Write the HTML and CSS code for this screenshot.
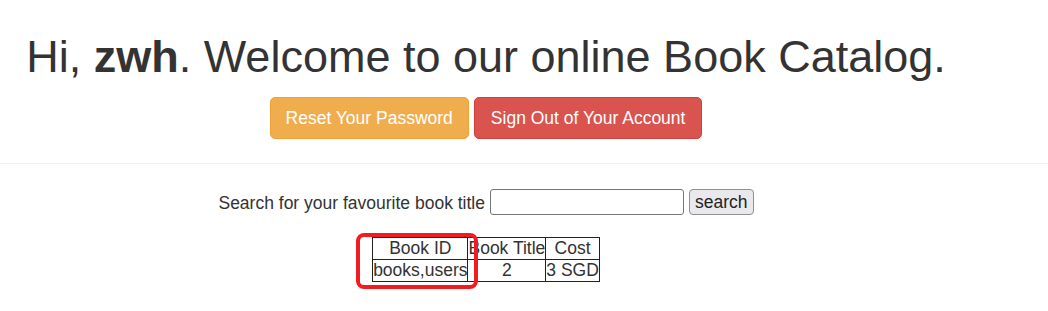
FILE: index.html
```html
<!DOCTYPE html>
<html lang="en">
<head>
  <meta charset="UTF-8">
  <meta name="viewport" content="width=device-width, initial-scale=1.0">
  <title>Book Catalog</title>
  <link rel="stylesheet" href="styles.css">
</head>
<body>
  <div class="page-header">
    <h1>Hi, <b>zwh</b>. Welcome to our online Book Catalog.</h1>
    <p class="actions">
      <a href="#" class="btn btn-warning">Reset Your Password</a>
      <a href="#" class="btn btn-danger">Sign Out of Your Account</a>
    </p>
  </div>

  <hr>

  <!-- search -->
  <form class="search-form" onsubmit="return false;">
    <label for="title">Search for your favourite book title</label>
    <input type="text" id="title" name="title">
    <button type="submit">search</button>
  </form>

  <!-- results -->
  <div class="results">
    <div class="table-wrap">
      <table class="book-table">
        <tr>
          <td>Book ID</td>
          <td>Book Title</td>
          <td>Cost</td>
        </tr>
        <tr>
          <td>books,users</td>
          <td>2</td>
          <td>3 SGD</td>
        </tr>
      </table>
      <div class="highlight"></div>
    </div>
  </div>
</body>
</html>
```

FILE: styles.css
```css
body {
  font-family: "Liberation Sans", Arial, sans-serif;
  font-size: 17.5px;
  line-height: 1.42857;
  color: #333;
  background-color: #fff;
  margin: 0;
}

.page-header,
.search-form,
.results {
  padding-right: 76px;
  text-align: center;
}

h1 {
  font-size: 45px;
  font-weight: normal;
  line-height: 49.5px;
  margin: 32px 0 0;
}

h1 b {
  font-weight: bold;
}

.actions {
  margin: 15px 0 0;
  font-size: 0;
}

.btn {
  display: inline-block;
  box-sizing: border-box;
  height: 42px;
  padding: 0 15px;
  margin: 0 2.5px;
  font-size: 17.5px;
  line-height: 40px;
  color: #fff;
  text-decoration: none;
  border: 1px solid transparent;
  border-radius: 5px;
}

.btn-warning {
  background-color: #f0ad4e;
  border-color: #eea236;
}

.btn-danger {
  padding: 0 16px;
  background-color: #d9534f;
  border-color: #d43f3a;
}

hr {
  margin: 24px 0 0;
  border: 0;
  border-top: 1px solid #eee;
}

.search-form {
  display: flex;
  justify-content: center;
  align-items: center;
  gap: 5px;
  margin-top: 25px;
}

.search-form label {
  font-size: 17.5px;
  padding-top: 2px;
}

.search-form input {
  box-sizing: border-box;
  width: 194px;
  height: 26px;
  border: 1px solid #767676;
  border-radius: 3px;
  padding: 1px 3px;
}

.search-form button {
  box-sizing: border-box;
  height: 26px;
  padding: 0 5px;
  font-family: "Liberation Sans", Arial, sans-serif;
  font-size: 17.5px;
  line-height: 24px;
  color: #222;
  background-color: #e9e9ed;
  border: 1px solid #8f8f9d;
  border-radius: 4px;
}

.results {
  margin-top: 22px;
}

.table-wrap {
  position: relative;
  display: inline-block;
}

.book-table {
  border-collapse: collapse;
  border: 1px solid #222;
}

.book-table td {
  border: 1px solid #222;
  padding: 0;
  line-height: 21px;
  text-align: center;
}

.highlight {
  position: absolute;
  left: -16px;
  top: -4px;
  width: 122px;
  height: 56px;
  box-sizing: border-box;
  border: 4px solid #f01c22;
  border-radius: 8px;
}
```
